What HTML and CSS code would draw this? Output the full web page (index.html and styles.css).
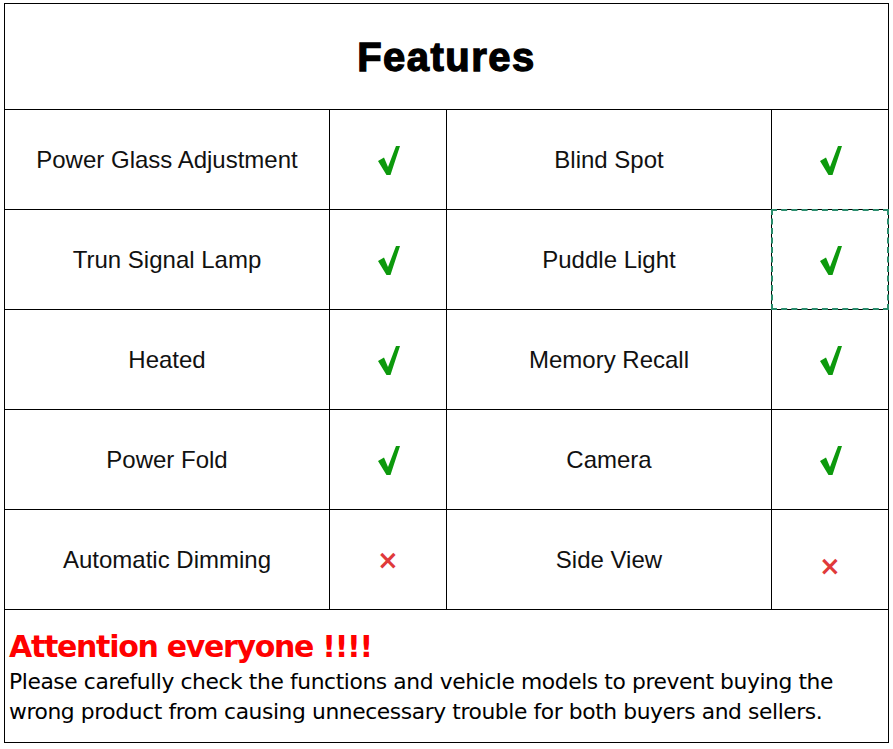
FILE: index.html
```html
<!DOCTYPE html>
<html>
<head>
<meta charset="utf-8">
<link rel="stylesheet" href="styles.css">
</head>
<body>
<div class="sheet">
  <div class="title">Features</div>
  <div class="cell name">Power Glass Adjustment</div>
  <div class="cell mark yes"><svg class="tick" viewBox="0 0 22 29"><polygon points="0,15 6,11.5 10,21 18,0 22,0 12.5,29 8.5,29"/></svg></div>
  <div class="cell name">Blind Spot</div>
  <div class="cell mark yes"><svg class="tick" viewBox="0 0 22 29"><polygon points="0,15 6,11.5 10,21 18,0 22,0 12.5,29 8.5,29"/></svg></div>

  <div class="cell name">Trun Signal Lamp</div>
  <div class="cell mark yes"><svg class="tick" viewBox="0 0 22 29"><polygon points="0,15 6,11.5 10,21 18,0 22,0 12.5,29 8.5,29"/></svg></div>
  <div class="cell name">Puddle Light</div>
  <div class="cell mark yes selected"><svg class="tick" viewBox="0 0 22 29"><polygon points="0,15 6,11.5 10,21 18,0 22,0 12.5,29 8.5,29"/></svg></div>

  <div class="cell name">Heated</div>
  <div class="cell mark yes"><svg class="tick" viewBox="0 0 22 29"><polygon points="0,15 6,11.5 10,21 18,0 22,0 12.5,29 8.5,29"/></svg></div>
  <div class="cell name">Memory Recall</div>
  <div class="cell mark yes"><svg class="tick" viewBox="0 0 22 29"><polygon points="0,15 6,11.5 10,21 18,0 22,0 12.5,29 8.5,29"/></svg></div>

  <div class="cell name">Power Fold</div>
  <div class="cell mark yes"><svg class="tick" viewBox="0 0 22 29"><polygon points="0,15 6,11.5 10,21 18,0 22,0 12.5,29 8.5,29"/></svg></div>
  <div class="cell name">Camera</div>
  <div class="cell mark yes"><svg class="tick" viewBox="0 0 22 29"><polygon points="0,15 6,11.5 10,21 18,0 22,0 12.5,29 8.5,29"/></svg></div>

  <div class="cell name">Automatic Dimming</div>
  <div class="cell mark no">×</div>
  <div class="cell name">Side View</div>
  <div class="cell mark no low">×</div>

  <div class="note">
    <div class="attention">Attention everyone !!!!</div>
    <p class="note-text">Please carefully check the functions and vehicle models to prevent buying the wrong product from causing unnecessary trouble for both buyers and sellers.</p>
  </div>
</div>
</body>
</html>
```

FILE: styles.css
```css
html, body {
  margin: 0;
  padding: 0;
  background: #ffffff;
}

body {
  padding: 3px 0 0 4px;
}

.sheet {
  display: grid;
  grid-template-columns: 325px 117px 325px 117px;
  grid-template-rows: 106px repeat(5, 100px) 133px;
  width: 885px;
  box-sizing: border-box;
  border-left: 1px solid #000;
  border-top: 1px solid #000;
}

.sheet > div {
  box-sizing: border-box;
  border-right: 1px solid #000;
  border-bottom: 1px solid #000;
}

.title {
  grid-column: 1 / 5;
  display: flex;
  align-items: center;
  justify-content: center;
  font-family: "Liberation Sans", Arial, sans-serif;
  font-weight: bold;
  font-size: 40px;
  letter-spacing: 1.5px;
  -webkit-text-stroke: 1.3px #000;
  color: #000;
  padding-top: 1px;
}

.cell {
  display: flex;
  align-items: center;
  justify-content: center;
}

.name {
  font-family: "Liberation Sans", Arial, sans-serif;
  font-size: 24px;
  color: #111;
  padding-top: 1px;
}

.mark {
  font-family: "DejaVu Sans", sans-serif;
  font-weight: bold;
}

.yes {
  color: #0d990d;
  padding-left: 2px;
  padding-top: 2px;
}

.tick {
  width: 22px;
  height: 29px;
  fill: #0d990d;
}

.no {
  color: #e03a3a;
  font-size: 26px;
  padding-bottom: 0;
}

.no.low {
  padding-top: 12px;
}

.selected {
  position: relative;
}

.selected::after {
  content: "";
  position: absolute;
  left: -1px;
  top: -1px;
  right: -1px;
  bottom: -1px;
  border: 2px dashed #2a8c6c;
  pointer-events: none;
}

.note {
  grid-column: 1 / 5;
  padding: 17px 0 0 4px;
  font-family: "DejaVu Sans", Verdana, sans-serif;
}

.attention {
  color: #ff0000;
  font-weight: bold;
  font-size: 30px;
  line-height: 40px;
  letter-spacing: -1.3px;
}

.note-text {
  margin: 0;
  max-width: 845px;
  font-size: 21.8px;
  line-height: 30px;
  color: #000;
  letter-spacing: -0.4px;
}
```
